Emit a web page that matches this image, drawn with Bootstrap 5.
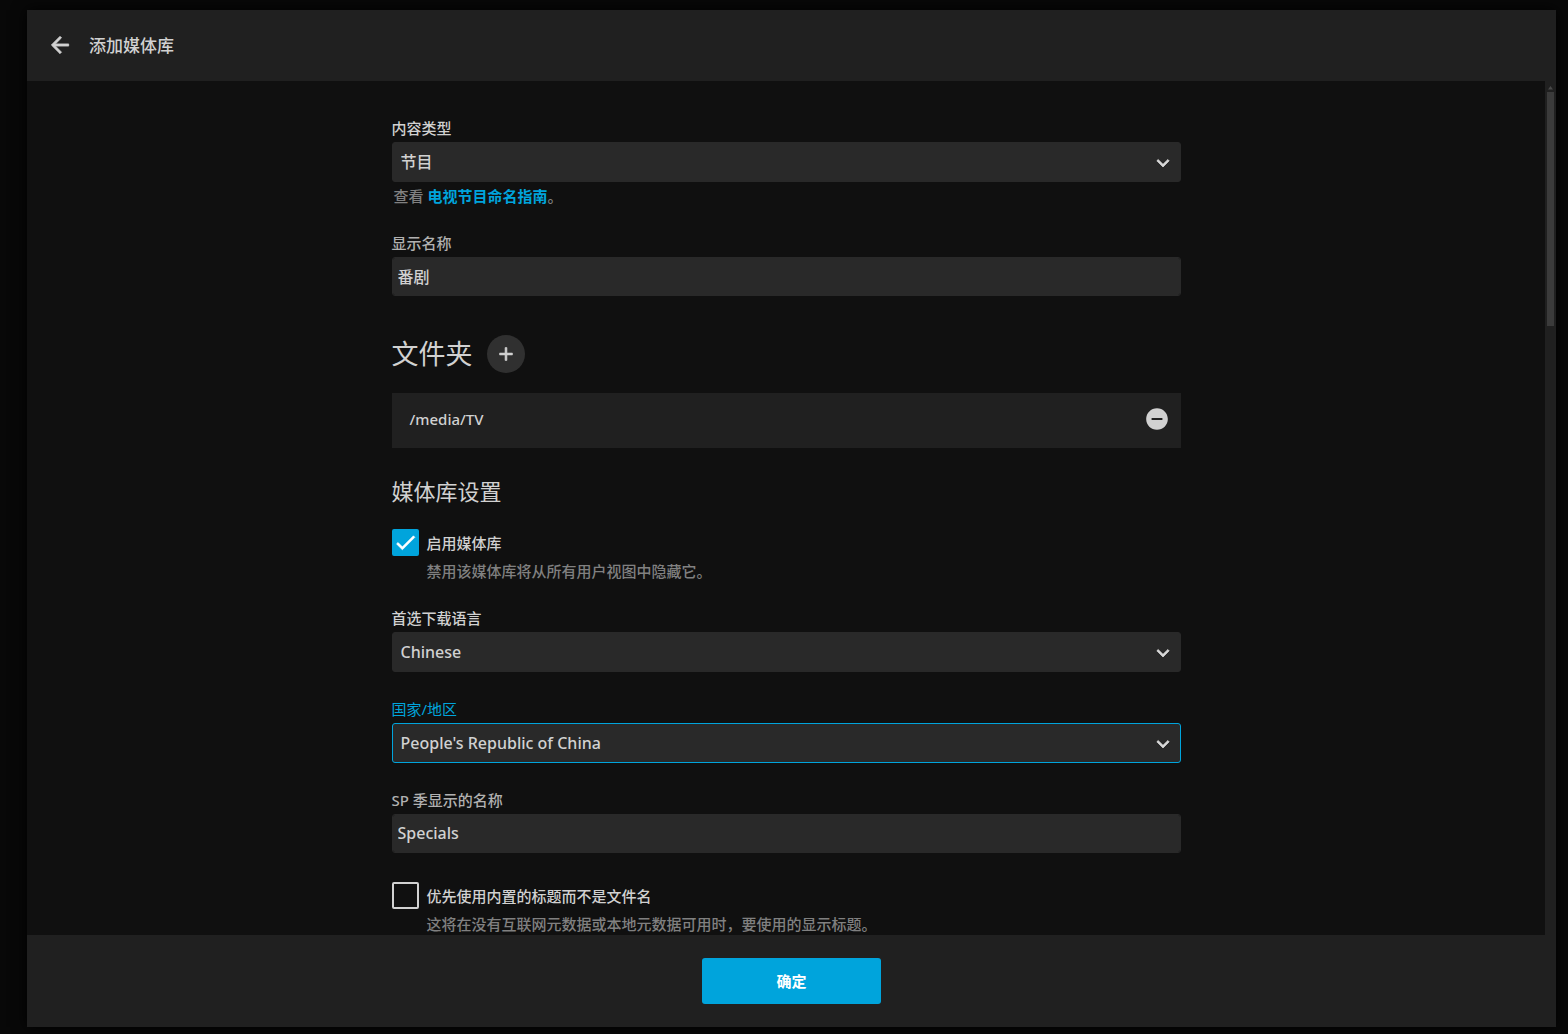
<!DOCTYPE html>
<html lang="zh-CN" data-bs-theme="dark">
<head>
<meta charset="utf-8">
<meta name="viewport" content="width=device-width, initial-scale=1">
<title>添加媒体库</title>
<link href="https://cdn.jsdelivr.net/npm/bootstrap@5.3.0/dist/css/bootstrap.min.css" rel="stylesheet">
<style>
  :root { --accent: #00a4dc; --text: #d1d1d1; --panel: #202020; --control: #292929; }
  body {
    background: #080808; color: var(--text);
    font-family: "Noto Sans", "Noto Sans CJK SC", sans-serif;
    font-size: 15px; line-height: 20px; font-weight: 500;
  }
  h1, h2, h3 { color: var(--text); }
  .page-wrap { padding: 10px 12px 7px 27px; }
  .dialog-box { background: var(--panel); box-shadow: 0 0 14px #000; min-height: 0; }
  .dialog-head { height: 71px; padding: 0 20px 2px; gap: 16px; }
  .dialog-title { font-size: 17px; line-height: 24px; font-weight: 500; padding-top: 2px; }
  .icon-btn { background: none; border: 0; padding: 0; color: inherit; display: flex; }
  .glyph { width: 26px; height: 26px; fill: currentColor; }
  .glyph-bold { stroke: currentColor; stroke-width: 0.7; }
  .scroll-pane { background: #101010; scrollbar-width: none; padding: 37px 16px 0; }
  .scroll-pane::-webkit-scrollbar { display: none; }
  .form-col { max-width: 789px; }
  .scroll-track { width: 11px; padding: 5px 2px 0; }
  .scroll-arrow { fill: #484848; display: block; margin: 0 auto 2px; }
  .scroll-thumb { height: 234px; background: #3b3b3b; }
  .field-row { margin-bottom: 27px; }
  .form-label { display: block; margin-bottom: 4px; }
  .text-label { color: #b1b1b1; }
  .active-label { color: var(--accent); font-weight: 400; }
  .form-control, .form-select {
    height: 40px; border: 1px solid var(--control); border-radius: 3px;
    background-color: var(--control); color: var(--text);
    font-size: 16px; line-height: 24px; font-weight: 500; padding: 0 5px;
  }
  .form-control { height: 39px; padding-bottom: 1px; }
  .form-select {
    padding: 0 40px 0 8px;
    background-image: url("data:image/svg+xml,%3Csvg xmlns='http://www.w3.org/2000/svg' viewBox='0 0 24 24'%3E%3Cpath fill='%23d8d8d8' stroke='%23d8d8d8' stroke-width='.7' d='M16.5 8.8L12 13.2 7.500 8.800 6.300 10l5.700 5.700L17.700 10z'/%3E%3C/svg%3E");
    background-size: 26px 26px; background-position: right 4px top 7px;
  }
  .form-control:focus, .form-select:focus, .form-select.is-active {
    border-color: var(--accent); box-shadow: none; background-color: var(--control);
  }
  .hint { color: #808080; }
  .guide-hint { padding-left: 2px; }
  .guide-link { color: var(--accent); font-weight: 600; text-decoration: none; }
  .folder-head { margin: 39px 0 20px; gap: 14px; }
  .folder-head h1 { font-size: 27px; line-height: 38px; font-weight: 400; margin: 0; }
  .add-btn { width: 38px; height: 38px; border: 0; background: #303030; color: var(--text); padding: 0; }
  .add-btn .glyph { width: 22px; height: 22px; }
  .folder-item { background: var(--panel); padding: 13px 11px 16px 18px; line-height: 26px; }
  .section-title { font-size: 22px; line-height: 30px; font-weight: 400; margin: 28px 0 21px; }
  .check-block { padding-top: 2px; }
  .check-row { gap: 8px; margin-bottom: 5px; }
  .check-row .form-check-input {
    width: 27px; height: 27px; margin: 0; flex-shrink: 0;
    border: 2px solid var(--text); border-radius: 2px; background-color: transparent;
  }
  .check-row .form-check-input:checked {
    background-color: var(--accent); border-color: var(--accent);
    background-image: url("data:image/svg+xml,%3Csvg xmlns='http://www.w3.org/2000/svg' viewBox='0 0 24 24'%3E%3Cpath fill='%23fff' stroke='%23fff' stroke-width='.6' d='M9 16.17L4.83 12l-1.42 1.41L9 19 21 7l-1.41-1.41z'/%3E%3C/svg%3E");
    background-size: 25px 25px; background-origin: border-box;
  }
  .check-hint { padding-left: 35px; }
  .dialog-foot { height: 92px; }
  .ok-btn {
    width: 179px; height: 46px; border: 0; border-radius: 3px; padding: 0;
    background: var(--accent); color: #fff; font-size: 15px; font-weight: 700;
  }
</style>
</head>
<body>
<div class="page-wrap vh-100 d-flex flex-column">
  <main class="dialog-box flex-grow-1 d-flex flex-column">
    <header class="dialog-head d-flex align-items-center flex-shrink-0">
      <button type="button" class="icon-btn" aria-label="返回">
        <svg class="glyph glyph-bold" viewBox="0 0 24 24" aria-hidden="true"><path d="M20 11H7.830l5.590-5.590L12 4l-8 8 8 8 1.410-1.410L7.830 13H20v-2z"/></svg>
      </button>
      <h3 class="dialog-title mb-0">添加媒体库</h3>
    </header>

    <div class="d-flex flex-grow-1 overflow-hidden">
      <div class="scroll-pane flex-grow-1 overflow-auto">
        <form class="form-col mx-auto" id="libraryForm">
          <div class="field-row">
            <label class="form-label" for="contentType">内容类型</label>
            <select class="form-select" id="contentType"><option>节目</option></select>
            <div class="hint guide-hint mt-1">查看 <a class="guide-link" href="#">电视节目命名指南</a>。</div>
          </div>

          <div>
            <label class="form-label text-label" for="displayName">显示名称</label>
            <input class="form-control" id="displayName" type="text" value="番剧">
          </div>

          <div class="folder-head d-flex align-items-center">
            <h1>文件夹</h1>
            <button type="button" class="add-btn rounded-circle d-flex align-items-center justify-content-center" aria-label="添加">
              <svg class="glyph glyph-bold" viewBox="0 0 24 24" aria-hidden="true"><path d="M19 13h-6v6h-2v-6H5v-2h6V5h2v6h6v2z"/></svg>
            </button>
          </div>
          <div class="folder-item d-flex align-items-center justify-content-between">
            <span>/media/TV</span>
            <button type="button" class="icon-btn" aria-label="移除">
              <svg class="glyph" viewBox="0 0 24 24" aria-hidden="true"><path d="M12 2C6.480 2 2 6.480 2 12s4.480 10 10 10 10-4.480 10-10S17.520 2 12 2zm5 11H7v-2h10v2z"/></svg>
            </button>
          </div>

          <h2 class="section-title">媒体库设置</h2>

          <div class="field-row check-block">
            <div class="check-row d-flex align-items-center">
              <input class="form-check-input" type="checkbox" id="enableLib" checked>
              <label for="enableLib">启用媒体库</label>
            </div>
            <div class="hint check-hint">禁用该媒体库将从所有用户视图中隐藏它。</div>
          </div>

          <div class="field-row">
            <label class="form-label" for="language">首选下载语言</label>
            <select class="form-select" id="language"><option>Chinese</option></select>
          </div>
          <div class="field-row">
            <label class="form-label active-label" for="country">国家/地区</label>
            <select class="form-select is-active" id="country"><option>People's Republic of China</option></select>
          </div>
          <div class="field-row">
            <label class="form-label text-label" for="seasonName">SP 季显示的名称</label>
            <input class="form-control" id="seasonName" type="text" value="Specials">
          </div>

          <div class="field-row check-block">
            <div class="check-row d-flex align-items-center">
              <input class="form-check-input" type="checkbox" id="embeddedTitles">
              <label for="embeddedTitles">优先使用内置的标题而不是文件名</label>
            </div>
            <div class="hint check-hint">这将在没有互联网元数据或本地元数据可用时，要使用的显示标题。</div>
          </div>
        </form>
      </div>
      <div class="scroll-track flex-shrink-0" aria-hidden="true">
        <svg class="scroll-arrow" width="5" height="4" viewBox="0 0 5 4"><path d="M0 3.500h5L2.500 0z"/></svg>
        <div class="scroll-thumb"></div>
      </div>
    </div>

    <footer class="dialog-foot d-flex align-items-center justify-content-center flex-shrink-0">
      <button type="submit" form="libraryForm" class="btn ok-btn">确定</button>
    </footer>
  </main>
</div>
<script src="https://cdn.jsdelivr.net/npm/bootstrap@5.3.0/dist/js/bootstrap.bundle.min.js"></script>
</body>
</html>
